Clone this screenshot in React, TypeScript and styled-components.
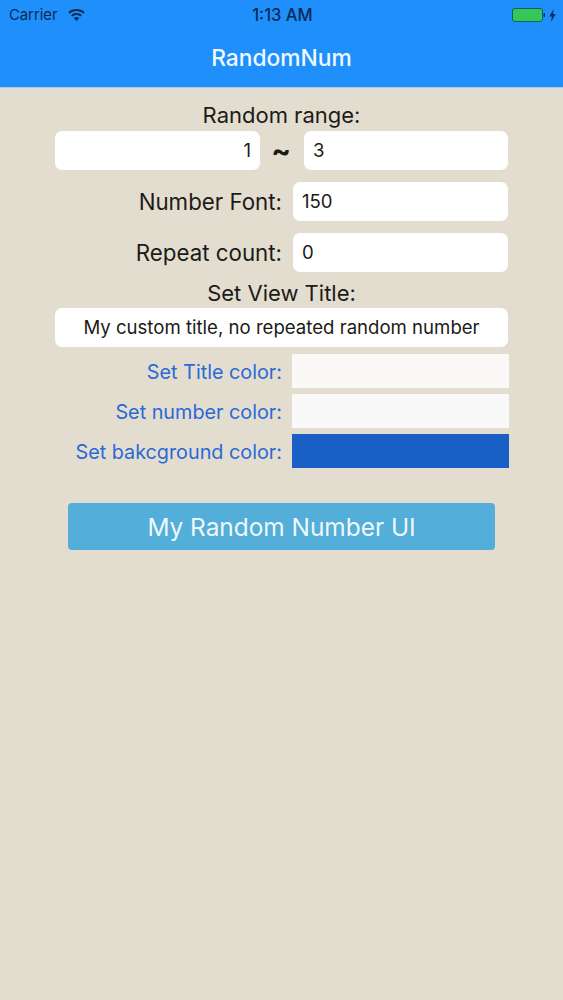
import React from 'react'
import styled, { createGlobalStyle } from 'styled-components'

const GlobalStyle = createGlobalStyle`
  html, body {
    margin: 0;
    padding: 0;
    background: #e3ddd0;
    font-family: Inter, "Liberation Sans", sans-serif;
  }
  * {
    box-sizing: border-box;
  }
`

const Page = styled.div`
  width: 563px;
  height: 1000px;
  overflow: hidden;
  background: #e3ddd0;
`

const Header = styled.header`
  height: 88px;
  background: #1e8ffb;
  border-bottom: 1px solid #a9c8e6;
`

const StatusBar = styled.div`
  height: 30px;
  padding: 0 7px 0 9px;
  display: grid;
  grid-template-columns: 1fr auto 1fr;
  align-items: center;
  color: #0a2a52;
  font-size: 14.8px;
`

const StatusLeft = styled.div`
  display: flex;
  align-items: center;
  gap: 10px;
`

const StatusTime = styled.div`
  font-weight: 500;
  font-size: 16.6px;
`

const StatusRight = styled.div`
  display: flex;
  justify-content: flex-end;
  align-items: center;
  gap: 4px;
`

const NavTitle = styled.div`
  height: 56px;
  padding-bottom: 1px;
  display: flex;
  align-items: center;
  justify-content: center;
  color: #eef9ff;
  font-size: 22.8px;
  font-weight: 500;
`

const Form = styled.main`
  padding: 12px 55px 0 55px;
  display: flex;
  flex-direction: column;
`

const CenterLabel = styled.div`
  height: 29px;
  display: flex;
  align-items: center;
  justify-content: center;
  color: #1c1b17;
  font-size: 22px;
`

const RangeRow = styled.div`
  display: grid;
  grid-template-columns: 205px 1fr 204px;
  align-items: center;
  margin-top: 2px;
  margin-bottom: 12px;
`

const Tilde = styled.div`
  padding-right: 2px;
  text-align: center;
  font-size: 29px;
  font-weight: 700;
  color: #1c1b17;
  line-height: 1;
`

const Field = styled.div<{ $align?: string }>`
  height: 39px;
  padding: 0 9px 2px;
  border-radius: 7px;
  background: #fff;
  display: flex;
  align-items: center;
  justify-content: ${props => props.$align || 'flex-start'};
  color: #1c1b17;
  font-size: 18.6px;
`

const FieldRow = styled.div`
  display: grid;
  grid-template-columns: 1fr 215px;
  column-gap: 11px;
  align-items: center;
  margin-bottom: 12px;
`

const FieldLabel = styled.div`
  text-align: right;
  color: #1c1b17;
  font-size: 22.3px;
`

const TitleBlock = styled.div`
  margin-top: -6px;
  margin-bottom: 7px;
  display: flex;
  flex-direction: column;
  gap: 1px;
`

const ColorList = styled.div`
  display: flex;
  flex-direction: column;
  gap: 6px;
  margin-right: -1px;
`

const ColorRow = styled.div`
  display: grid;
  grid-template-columns: 1fr 217px;
  column-gap: 10px;
  align-items: center;
`

const ColorLabel = styled.div`
  margin-left: -30px;
  padding-top: 2px;
  text-align: right;
  white-space: nowrap;
  color: #2a69d6;
  font-size: 19.8px;
`

const Swatch = styled.div<{ $color: string }>`
  height: 34px;
  background: ${props => props.$color};
`

const MainButton = styled.div`
  align-self: center;
  width: 427px;
  height: 47px;
  margin-top: 35px;
  border-radius: 4px;
  background: #53aed9;
  color: #eef8fb;
  font-size: 24.4px;
  display: flex;
  align-items: center;
  justify-content: center;
`

const WifiIcon = () => (
  <svg width="17" height="12" viewBox="0 0 17 12" fill="#0a2a52">
    <path d="M8.5 0C5.3 0 2.4 1.2 0.3 3.2L1.7 4.7C3.5 3 5.9 2 8.5 2s5 1 6.8 2.7l1.4-1.5C14.6 1.2 11.7 0 8.5 0z" />
    <path d="M8.5 4C6.4 4 4.5 4.8 3.1 6.1l1.4 1.5c1-1 2.4-1.6 4-1.6s3 .6 4 1.6l1.4-1.5C12.5 4.8 10.6 4 8.5 4z" />
    <path d="M8.5 8C7.4 8 6.5 8.4 5.8 9l2.7 3 2.7-3c-.7-.6-1.6-1-2.7-1z" />
  </svg>
)

const BatteryIcon = () => (
  <svg width="33" height="14" viewBox="0 0 33 14">
    <rect x="0.5" y="0.5" width="30" height="13" rx="2.5" fill="#34c759" stroke="#0c5f60" />
    <rect x="31.5" y="5" width="1.5" height="4" rx="0.7" fill="#0a2a52" />
  </svg>
)

const BoltIcon = () => (
  <svg width="7" height="13" viewBox="0 0 7 13" fill="#0a2a52">
    <path d="M4.6 0L0.4 7.4h2.5L2 13l4.6-8H4L4.6 0z" />
  </svg>
)

const colorRows = [
  { label: 'Set Title color:', color: '#faf9f8' },
  { label: 'Set number color:', color: '#faf9f9' },
  { label: 'Set bakcground color:', color: '#1a5fc6' },
]

export default function App() {
  return (
    <Page>
      <GlobalStyle />
      <Header>
        <StatusBar>
          <StatusLeft>
            Carrier
            <WifiIcon />
          </StatusLeft>
          <StatusTime>1:13 AM</StatusTime>
          <StatusRight>
            <BatteryIcon />
            <BoltIcon />
          </StatusRight>
        </StatusBar>
        <NavTitle>RandomNum</NavTitle>
      </Header>
      <Form>
        <CenterLabel>Random range:</CenterLabel>
        <RangeRow>
          <Field $align="flex-end">1</Field>
          <Tilde>~</Tilde>
          <Field>3</Field>
        </RangeRow>
        <FieldRow>
          <FieldLabel>Number Font:</FieldLabel>
          <Field>150</Field>
        </FieldRow>
        <FieldRow>
          <FieldLabel>Repeat count:</FieldLabel>
          <Field>0</Field>
        </FieldRow>
        <TitleBlock>
          <CenterLabel>Set View Title:</CenterLabel>
          <Field $align="center">My custom title, no repeated random number</Field>
        </TitleBlock>
        <ColorList>
          {colorRows.map(row => (
            <ColorRow key={row.label}>
              <ColorLabel>{row.label}</ColorLabel>
              <Swatch $color={row.color} />
            </ColorRow>
          ))}
        </ColorList>
        <MainButton>My Random Number UI</MainButton>
      </Form>
    </Page>
  )
}
